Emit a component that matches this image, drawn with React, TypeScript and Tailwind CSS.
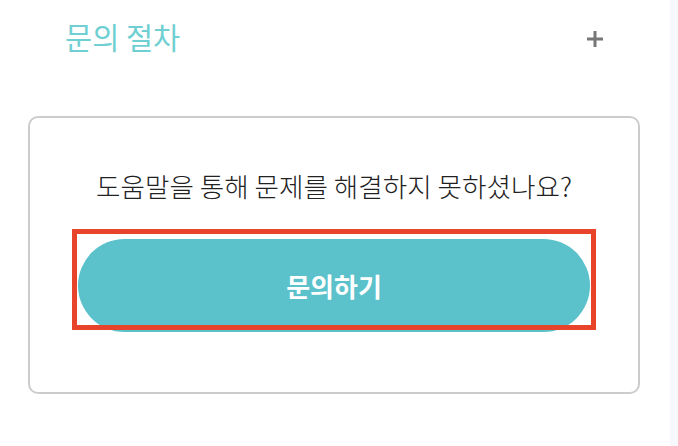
import React from "react";

const font = { fontFamily: '"Noto Sans CJK KR", "Noto Sans", sans-serif' };

const App = () => {
  return (
    <div className="flex w-[678px] h-[446px] bg-white" style={font}>
      <div className="flex-1 flex flex-col">
        {/* section header */}
        <div className="flex items-center justify-between pl-[65px] pr-[67px] h-[74px]">
          <h2 className="text-[29.5px] leading-none text-[#6fcfd2] font-normal">문의 절차</h2>
          <svg width="16" height="16" viewBox="0 0 16 16" className="mt-[4px]">
            <rect x="0" y="6.5" width="16" height="3" fill="#777" />
            <rect x="6.5" y="0" width="3" height="16" fill="#777" />
          </svg>
        </div>

        {/* contact card */}
        <div className="relative ml-[28px] mr-[30px] mt-[42px] h-[278px] border-2 border-[#cccccc] rounded-[10px] px-[48px] pt-[50px] flex flex-col">
          <p className="text-center text-[26.6px] leading-[36px] text-[#222] font-light">
            도움말을 통해 문제를 해결하지 못하셨나요?
          </p>
          <button className="mt-[35px] h-[93px] w-full rounded-full bg-[#5bc2cb] text-white text-[26px] font-semibold">
            문의하기
          </button>
          <div className="absolute left-[42px] top-[111px] w-[524px] h-[101px] border-[5px] border-[#e8442c]" />
        </div>
      </div>
      <div className="w-[8px] bg-[#f7f8fc]" />
    </div>
  );
};

export default App;
